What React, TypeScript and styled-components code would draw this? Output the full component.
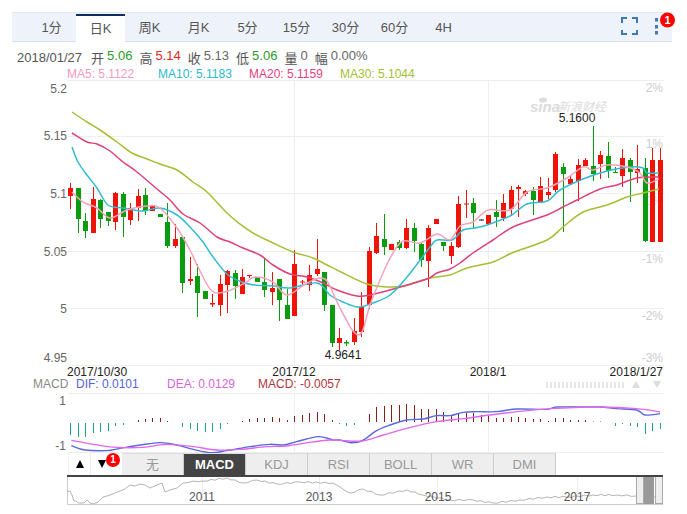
import React from "react";
import styled, { createGlobalStyle } from "styled-components";

const GlobalStyle = createGlobalStyle`
  html, body { margin: 0; padding: 0; background: #fff; }
  body { font-family: "Liberation Sans", "Noto Sans CJK SC", sans-serif; }
`;

const Page = styled.div`
  width: 687px;
  height: 514px;
  overflow: hidden;
  padding-top: 12px;
  box-sizing: border-box;
`;
const Toolbar = styled.div`
  display: flex;
  align-items: flex-end;
  width: 660px;
  height: 30px;
  margin-left: 12px;
  padding-left: 15px;
  box-sizing: border-box;
  background: #eef3fb;
  border-top: 1px solid #dfe7f3;
  border-bottom: 1px solid #d9e3f0;
  position: relative;
`;
const Tab = styled.div<{ $active?: boolean }>`
  width: 49px;
  height: 28px;
  line-height: 26px;
  margin-bottom: ${(p) => (p.$active ? -1 : 0)}px;
  text-align: center;
  font-size: 13px;
  color: #555;
  box-sizing: border-box;
  background: ${(p) => (p.$active ? "#fff" : "transparent")};
  border-top: 2px solid ${(p) => (p.$active ? "#0f2c68" : "transparent")};
`;
const ToolIcons = styled.svg`
  position: absolute;
  right: 0;
  top: -1px;
  width: 60px;
  height: 30px;
  overflow: visible;
`;
const BadgeText = styled.text`
  font-size: 11px;
  font-weight: bold;
  fill: #fff;
  text-anchor: middle;
`;
const InfoRow = styled.div`
  display: flex;
  align-items: center;
  height: 23px;
  margin: 4px 0 0 17px;
  font-size: 13px;
  color: #555;
  white-space: nowrap;
`;
const DateText = styled.span`
  margin-right: 2px;
`;
const Field = styled.span`
  margin-left: 7px;
  display: inline-flex;
  gap: 3px;
`;
const Val = styled.span<{ $c?: string }>`
  color: ${(p) => p.$c || "#666"};
`;
const MaRow = styled.div`
  display: flex;
  height: 11px;
  line-height: 11px;
  margin-left: 67px;
  font-size: 12px;
  white-space: nowrap;
`;
const Ma = styled.span<{ $c: string }>`
  width: 91px;
  color: ${(p) => p.$c};
`;
const Drawing = styled.svg<{ $h: number }>`
  display: block;
  width: 687px;
  height: ${(p) => p.$h}px;
`;
const Lbl = styled.text<{ $c?: string; $a?: string; $s?: number }>`
  font-size: ${(p) => p.$s || 12}px;
  fill: ${(p) => p.$c || "#666"};
  text-anchor: ${(p) => p.$a || "end"};
  dominant-baseline: central;
`;
const Wm = styled.text<{ $s: number; $w?: string }>`
  font-size: ${(p) => p.$s}px;
  font-style: italic;
  font-weight: ${(p) => p.$w || "normal"};
  fill: #dcdcdc;
`;
const Legend = styled.div`
  display: flex;
  align-items: center;
  height: 15px;
  padding: 0 0 3px 33px;
  box-sizing: border-box;
  font-size: 12px;
  line-height: 12px;
  white-space: nowrap;
  position: relative;
`;
const LegendItem = styled.span<{ $c: string; $w: number }>`
  width: ${(p) => p.$w}px;
  color: ${(p) => p.$c};
  flex: none;
`;
const PagerMarks = styled.svg`
  position: absolute;
  left: 540px;
  top: 0;
  width: 130px;
  height: 15px;
`;
const TabsRow = styled.div`
  display: flex;
  height: 22px;
  margin-left: 68px;
`;
const Arrow = styled.div<{ $w: number }>`
  width: ${(p) => p.$w}px;
  height: 22px;
  flex: none;
  display: flex;
  align-items: center;
  justify-content: center;
  box-sizing: border-box;
  border-left: 1px solid #eee;
  position: relative;
`;
const Tri = styled.i<{ $up?: boolean }>`
  display: block;
  width: 0;
  height: 0;
  border-left: 4.5px solid transparent;
  border-right: 4.5px solid transparent;
  border-${(p) => (p.$up ? "bottom" : "top")}: 8px solid #000;
`;
const DownTri = styled(Tri)`
  margin-right: 9px;
`;
const Badge = styled.span`
  position: absolute;
  left: 15px;
  top: 0;
  width: 14px;
  height: 14px;
  border-radius: 50%;
  background: #f00;
  color: #fff;
  font-size: 10px;
  font-weight: bold;
  line-height: 14px;
  text-align: center;
`;
const IndTab = styled.div<{ $active?: boolean }>`
  width: 62px;
  height: 22px;
  flex: none;
  box-sizing: border-box;
  line-height: 22px;
  text-align: center;
  font-size: 13px;
  font-weight: ${(p) => (p.$active ? "bold" : "normal")};
  color: ${(p) => (p.$active ? "#fff" : "#999")};
  background: ${(p) => (p.$active ? "#444" : "#eee")};
  border-right: 1px solid #ccc;
  border-top: 1px solid #ddd;
`;
const ThickBar = styled.div`
  width: 596px;
  height: 2px;
  margin-left: 67px;
  background: #444;
`;

const R = "#f01408";
const G = "#0a9c0e";
type C = [number, number, number, number, string];
const candles: C[] = [
  [188,196,183,209,R],[188,219,188,233,G],[221,231,213,238,G],[199,233,187,233,R],[200,219,199,228,G],
  [212,221,212,226,G],[193,222,192,230,R],[194,217,192,237,G],[208,220,203,225,R],[196,208,189,221,R],
  [195,211,188,215,G],[205,211,205,211,R],[214,217,214,217,G],[222,246,203,248,G],[239,246,224,248,R],
  [237,283,237,293,G],[279,281,257,285,R],[276,293,264,317,G],[291,299,291,299,G],[303,304.5,294,307,R],
  [284,305,275,316,R],[271,285,270,313,R],[273,286,270,299,G],[277,294,269,294,R],[275,276,275,278,R],
  [277,282,277,282,G],[282,290,258,297,G],[288,292,272,305,R],[279,300,279,321,G],[305,319,289,319,G],
  [264,316,250,316,R],[281.5,282.5,280,285,R],[275,285,265,291,R],[269,274,239,276,R],[272,305,272,311,G],
  [305,343,305,347,G],[338,343,328,350,R],[342,343.5,340,346,G],[331,342,318,345,R],[307,332,292,337,R],
  [251,305,247,309,R],[236,253,223,254,R],[239,247,214,255,G],[244,250,244,250,R],[242,248,240,250,G],
  [228,248,219,249,R],[228,241,223,252,G],[244,260,242,267,G],[228,261,225,287,R],[219,224,219,224,R],
  [242,246,242,251,G],[246,256,242,264,R],[204,247,196,248,R],[203.5,204.5,190,218,R],[203,213,198,228,G],
  [219.5,220.5,219.5,220.5,"#222"],[215,224,215,224,R],[212,217,200,227,G],[203,218,194,221,R],[190,209,186,216,R],
  [187,189,185,217,R],[191,194,190,196,R],[191,200,187,215,G],[186,202,177,203,R],[192,195,178,199,R],
  [154,190,152,192,R],[167,174,163,232,G],[179,184,175,185,R],[165,181,159,201,R],[160,166,158,166,R],
  [166,174,126,181,G],[155,164,151,179,R],[156,171,142,178,G],[172,173,167,173,G],[158,176,149,187,R],
  [160,172,158,202,G],[169,173,145,183,R],[168,241,158,242,G],[160,242,148,242,R],[160,242,148,242,R],
];
const cx = (i: number) => 70.4 + i * 7.46;

const ma30: number[][] = [[72,112],[87,122],[100,130],[117,142],[132,153],[147,159],[160,164],[177,170],[193,182],[207,192],[227,213],[240,224],[253,233],[273,243],[293,252],[313,258],[327,265],[343,273],[367,284],[387,287],[403,286],[430,278],[450,275],[467,268],[493,262],[512,253],[547,240],[563,227],[583,212],[607,205],[627,197],[643,193],[659,189]];
const ma20: number[][] = [[72,133],[87,142],[97,144],[110,151],[123,162],[137,172],[157,189],[170,200],[183,214],[200,223],[217,237],[230,242],[243,248],[260,255],[273,265],[290,274],[307,277],[323,283],[337,290],[357,296],[370,295],[397,288],[427,279],[437,273],[450,269],[460,263],[473,253],[493,240],[513,227],[547,215],[563,207],[577,200],[600,189],[617,185],[637,178],[659,177]];
const ma10: number[][] = [[72,147],[78,162],[87,175],[97,188],[108,205],[123,208],[143,211],[160,208],[177,215],[190,227],[203,242],[213,257],[228,275],[245,283],[255,285],[273,286],[290,288],[317,283],[330,295],[343,302],[358,307],[373,303],[390,295],[407,277],[430,247],[437,240],[452,240],[463,230],[475,228],[487,225],[510,216],[527,204],[547,201],[560,190],[583,179],[607,171],[630,167],[643,168],[647,173],[659,173]];
const ma5: number[][] = [[72,192],[83,202],[97,208],[110,218],[127,210],[147,206],[160,208],[177,228],[190,250],[198,267],[212,291],[228,291],[245,283],[255,277],[273,282],[287,295],[307,283],[325,279],[337,302],[353,331],[362,332],[370,305],[383,273],[393,253],[403,241],[420,243],[437,234],[450,240],[460,226],[473,222],[488,210],[510,210],[527,192],[547,188],[567,178],[583,167],[593,170],[607,165],[627,167],[640,173],[647,183],[659,179]];

const smooth = (p: number[][]) => {
  let d = `M${p[0][0]} ${p[0][1]}`;
  for (let i = 0; i < p.length - 1; i++) {
    const a = p[Math.max(i - 1, 0)], b = p[i], c = p[i + 1], e = p[Math.min(i + 2, p.length - 1)];
    d += `C${(b[0] + (c[0] - a[0]) / 6).toFixed(1)} ${(b[1] + (c[1] - a[1]) / 6).toFixed(1)} ${(c[0] - (e[0] - b[0]) / 6).toFixed(1)} ${(c[1] - (e[1] - b[1]) / 6).toFixed(1)} ${c[0]} ${c[1]}`;
  }
  return d;
};

const hist = [-12,-14,-14,-10,-9,-8,-3,-2,0,2,3,4,4,1,0,-4,-6,-8,-9,-9,-6,-1,0,1,3,4,4,5,4,2,6,7,9,10,8,2,-1,-3,-2,0,8,15,16,17,17,18,17,13,13,13,10,7,9,9,9,7,6,4,4,5,5,4,3,3,1,4,4,2,2,2,0.5,0.5,0,-3,-1,-3,-4,-11,-8,-6];

const z6 = (a: number[][]) => a.map(([x, y]) => [x / 3, 360 + y / 3]);
const z7 = (a: number[][]) => a.map(([x, y]) => [340 + x / 3, 360 + y / 3]);
const dif = [...z6([[214,257],[255,270],[320,272],[360,265],[420,255],[480,248],[530,255],[580,268],[630,278],[680,272],[750,260],[810,253],[850,255],[890,245],[955,230],[1000,240]]), ...z7([[0,240],[30,248],[65,243],[110,212],[150,195],[200,180],[250,177],[290,167],[330,167],[370,157],[410,155],[470,155],[530,147],[620,148],[650,141],[730,141],[780,141],[830,146],[890,150],[915,165],[960,161]])];
const dea = [...z6([[214,241],[280,253],[350,262],[430,262],[500,253],[580,260],[650,270],[720,268],[800,260],[860,258],[930,247],[990,240]]), ...z7([[0,241],[65,243],[130,225],[200,205],[290,185],[370,176],[450,165],[560,152],[650,145],[780,141],[890,146],[960,156]])];

const navRaw = [[67,492],[70,491],[72,495],[74,501],[76,501],[78,503],[84,503],[87,500],[90,503],[93,504],[98,502],[103,497],[107,496],[110,495],[115,493],[120,491],[125,489],[130,485],[135,486],[140,484],[145,485],[150,488],[157,485],[162,483],[165,492],[170,490],[177,488],[183,483],[193,481],[203,481],[227,478],[243,483],[257,480],[277,484],[300,482],[333,483],[340,487],[350,493],[363,489],[380,495],[407,490],[423,495],[450,500],[473,500],[493,503],[520,500],[547,497],[567,497],[593,495],[617,495],[636,496],[655,497]];
const nav: number[][] = [];
navRaw.forEach((p, i) => {
  nav.push(p);
  const n = navRaw[i + 1];
  if (n) {
    const k = Math.max(1, Math.floor((n[0] - p[0]) / 4));
    for (let j = 1; j < k; j++) {
      nav.push([p[0] + ((n[0] - p[0]) * j) / k, p[1] + ((n[1] - p[1]) * j) / k + (j % 2 ? 0.7 : -0.6)]);
    }
  }
});
const navPts = nav.map((p) => `${p[0].toFixed(1)},${p[1].toFixed(1)}`).join(" ");

const tabs = ["1分", "日K", "周K", "月K", "5分", "15分", "30分", "60分", "4H"];
const inds = ["无", "MACD", "KDJ", "RSI", "BOLL", "WR", "DMI"];
const dots = Array.from({ length: 20 }, (_, i) => 546 + i * 4);

export default function App() {
  return (
    <Page>
      <GlobalStyle />
      <Toolbar>
        {tabs.map((t) => (
          <Tab key={t} $active={t === "日K"}>{t}</Tab>
        ))}
        <ToolIcons viewBox="612 12 60 30">
          <path d="M622 23v-5h5M632 18h5v5M637 30v4h-5M627 34h-5v-4" fill="none" stroke="#3f78b8" strokeWidth="2" />
          <rect x="655" y="18" width="3" height="3.5" fill="#3f78b8" />
          <rect x="655" y="25" width="3" height="3.5" fill="#3f78b8" />
          <rect x="655" y="31" width="3" height="3.5" fill="#3f78b8" />
          <circle cx="667.5" cy="20" r="7.5" fill="#f00" />
          <BadgeText x="667.5" y="24">1</BadgeText>
        </ToolIcons>
      </Toolbar>
      <InfoRow>
        <DateText>2018/01/27</DateText>
        <Field>开<Val $c="#2a9a2a">5.06</Val></Field>
        <Field>高<Val $c="#e0281c">5.14</Val></Field>
        <Field>收<Val>5.13</Val></Field>
        <Field>低<Val $c="#2a9a2a">5.06</Val></Field>
        <Field>量<Val>0</Val></Field>
        <Field>幅<Val>0.00%</Val></Field>
      </InfoRow>
      <MaRow>
        <Ma $c="#f29bbd">MA5: 5.1122</Ma>
        <Ma $c="#2bb9cc">MA10: 5.1183</Ma>
        <Ma $c="#e8407c">MA20: 5.1159</Ma>
        <Ma $c="#a3c035">MA30: 5.1044</Ma>
      </MaRow>
      <Drawing $h={298} viewBox="0 80 687 298">
        <path d="M68 80.5H664M68 365.5H664M294.5 80V365M488.5 80V365" stroke="#eee" fill="none" />
        <path d="M68 136.5H664M68 193.5H664M68 251.5H664M68 308.5H664" stroke="#eee" fill="none" />
        <Wm x="530" y="112" $s={15} $w="bold">sina</Wm>
        <Wm x="558" y="111" $s={12}>新浪财经</Wm>
        <ellipse cx="543" cy="100" rx="4" ry="2.5" fill="#dcdcdc" />
        <Lbl x="663" y="88" $c="#ccc">2%</Lbl>
        <Lbl x="663" y="144" $c="#ccc">1%</Lbl>
        <Lbl x="663" y="201" $c="#ddd">0%</Lbl>
        <Lbl x="663" y="259" $c="#ccc">-1%</Lbl>
        <Lbl x="663" y="316" $c="#ccc">-2%</Lbl>
        <Lbl x="663" y="358" $c="#ccc">-3%</Lbl>
        <Lbl x="67" y="89">5.2</Lbl>
        <Lbl x="67" y="136">5.15</Lbl>
        <Lbl x="67" y="194">5.1</Lbl>
        <Lbl x="67" y="252">5.05</Lbl>
        <Lbl x="67" y="309">5</Lbl>
        <Lbl x="67" y="358">4.95</Lbl>
        <Lbl x="67" y="371.5" $a="start" $c="#222">2017/10/30</Lbl>
        <Lbl x="294" y="371.5" $a="middle" $c="#222">2017/12</Lbl>
        <Lbl x="488" y="371.5" $a="middle" $c="#222">2018/1</Lbl>
        <Lbl x="663" y="371.5" $c="#222">2018/1/27</Lbl>
        {candles.map((c, i) => {
          const x = Math.round(cx(i));
          return (
            <g key={i} fill={c[4]}>
              <rect x={x} y={c[2]} width="1" height={c[3] - c[2]} />
              <rect x={x - 2} y={c[0]} width="5" height={Math.max(c[1] - c[0], 1)} />
            </g>
          );
        })}
        <path d={smooth(ma30)} fill="none" stroke="#a5bf35" strokeWidth="1.5" />
        <path d={smooth(ma20)} fill="none" stroke="#e0407a" strokeWidth="1.5" />
        <path d={smooth(ma10)} fill="none" stroke="#2fbcd0" strokeWidth="1.5" />
        <path d={smooth(ma5)} fill="none" stroke="#f4a3bb" strokeWidth="1.5" />
        <Lbl x="577" y="118" $a="middle" $c="#222">5.1600</Lbl>
        <Lbl x="343" y="355" $a="middle" $c="#222">4.9641</Lbl>
      </Drawing>
      <Legend>
        <LegendItem $c="#888" $w={43}>MACD</LegendItem>
        <LegendItem $c="#5564d8" $w={91}>DIF: 0.0101</LegendItem>
        <LegendItem $c="#d566dc" $w={91}>DEA: 0.0129</LegendItem>
        <LegendItem $c="#b2343e" $w={90}>MACD: -0.0057</LegendItem>
        <PagerMarks viewBox="540 378 130 15">
          {dots.map((x) => (
            <rect key={x} x={x} y="382" width="2" height="6" fill="#e6e6e6" />
          ))}
          <path d="M632 388l4-7 4 7zM653 381h8l-4 7z" fill="#ddd" />
        </PagerMarks>
      </Legend>
      <Drawing $h={60} viewBox="0 393 687 60">
        <path d="M68 393.5H664M68 452.5H664M294.5 393V452M488.5 393V452" stroke="#eee" fill="none" />
        <Lbl x="66" y="401">1</Lbl>
        <Lbl x="66" y="446">-1</Lbl>
        {hist.map((h, i) => {
          const x = Math.round(cx(i));
          if (h === 0) return null;
          return <rect key={i} x={x} y={h > 0 ? 422 - h : 423} width="1" height={Math.abs(h)} fill={h > 0 ? "#8b1f18" : "#1fa584"} />;
        })}
        <path d={smooth(dif)} fill="none" stroke="#5a68e0" strokeWidth="1.4" />
        <path d={smooth(dea)} fill="none" stroke="#e068ea" strokeWidth="1.4" />
      </Drawing>
      <TabsRow>
        <Arrow $w={22}><Tri $up /></Arrow>
        <Arrow $w={32}>
          <DownTri />
          <Badge>1</Badge>
        </Arrow>
        {inds.map((t) => (
          <IndTab key={t} $active={t === "MACD"}>{t}</IndTab>
        ))}
      </TabsRow>
      <ThickBar />
      <Drawing $h={29} viewBox="0 477 687 29">
        <path d="M67.5 477V504.5H663" stroke="#ccc" fill="none" />
        <path d="M202.5 477V504M319.5 477V504M437.5 477V504M577.5 477V504" stroke="#eee" fill="none" />
        <polyline points={navPts} fill="none" stroke="#b4b4b4" />
        <Lbl x="202" y="497" $a="middle" $c="#555">2011</Lbl>
        <Lbl x="319" y="497" $a="middle" $c="#555">2013</Lbl>
        <Lbl x="438" y="497" $a="middle" $c="#555">2015</Lbl>
        <Lbl x="577" y="497" $a="middle" $c="#555">2017</Lbl>
        <rect x="643" y="477" width="11" height="27" fill="#999" />
        <rect x="636.5" y="475.5" width="7" height="28" fill="#eee" stroke="#aaa" />
        <rect x="655.5" y="475.5" width="7" height="28" fill="#eee" stroke="#aaa" />
      </Drawing>
    </Page>
  );
}
